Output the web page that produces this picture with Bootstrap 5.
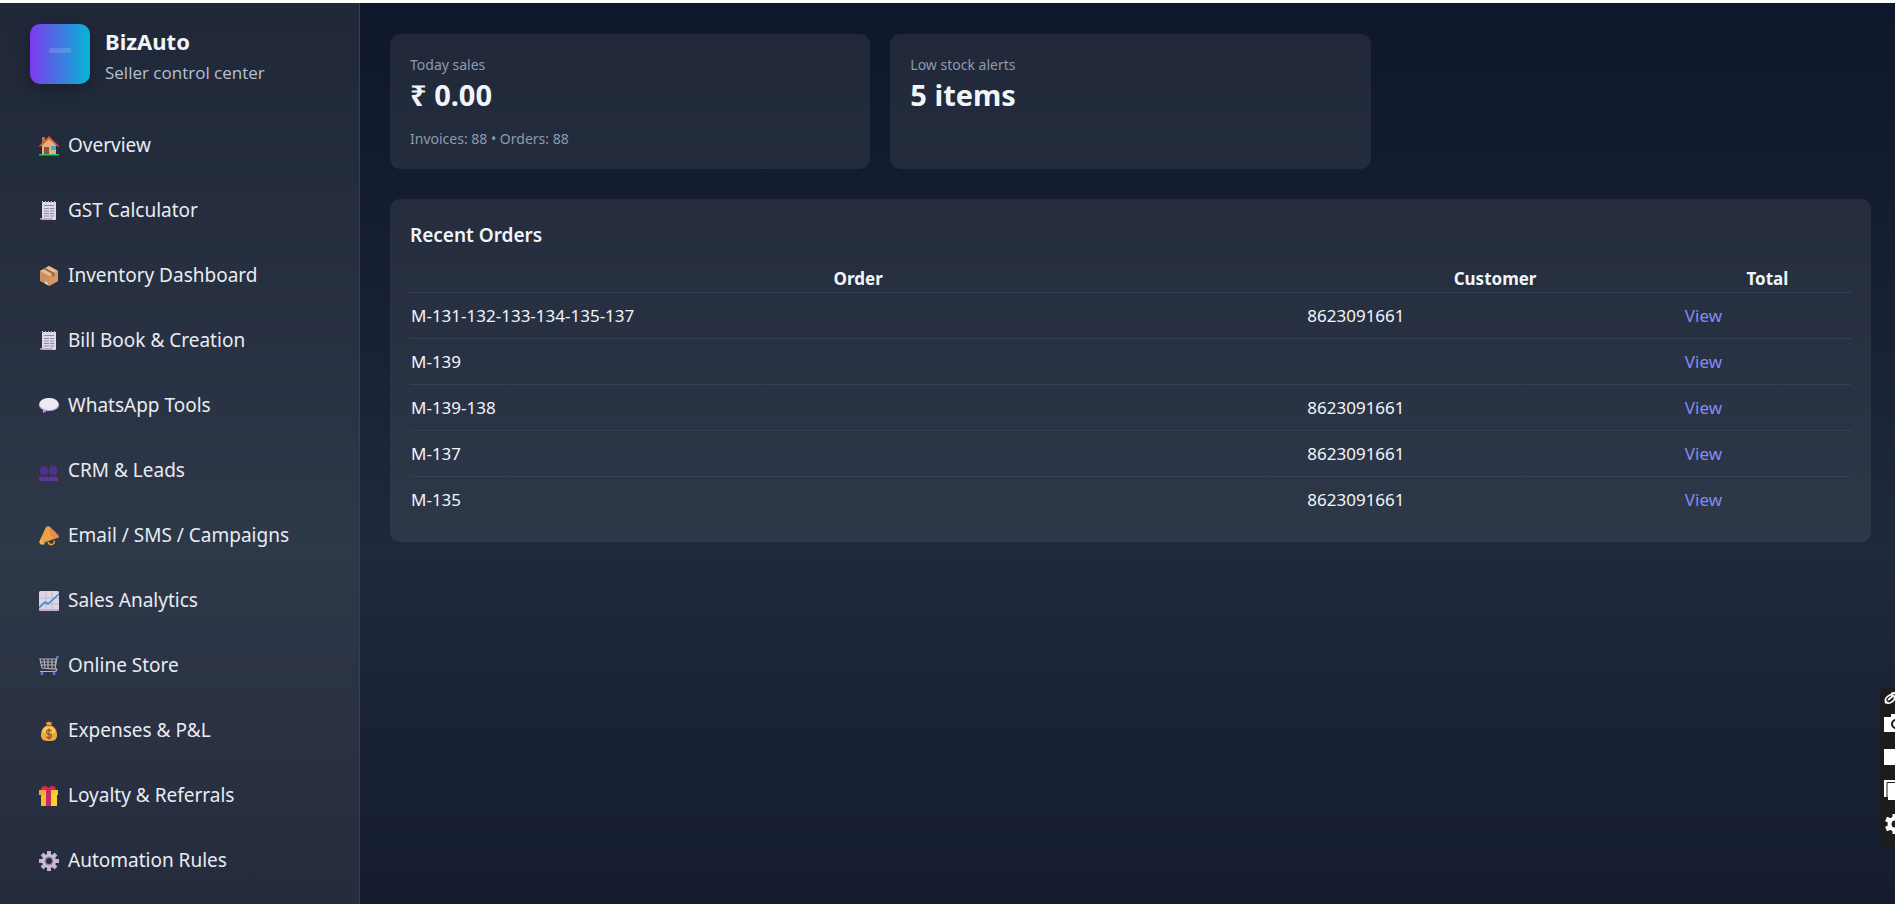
<!DOCTYPE html>
<html lang="en">
<head>
<meta charset="utf-8">
<meta name="viewport" content="width=device-width, initial-scale=1">
<title>BizAuto</title>
<link href="https://cdn.jsdelivr.net/npm/bootstrap@5.3.0/dist/css/bootstrap.min.css" rel="stylesheet">
<style>
body{font-family:"Noto Sans","Open Sans",sans-serif;color:#f1f5f9;background:#0f172a}
.app-shell{background:linear-gradient(180deg,#0f172a 0,#1e293b 61%,#151c2f 100%);border-top:3px solid #fcfcfa}
.sidebar{width:360px;background:rgba(255,255,255,.07);border-right:1px solid #334155;padding:21px 30px 0}
.brand{gap:15px}
.brand-text{padding-top:3px}
.logo-tile{width:60px;height:60px;border-radius:10px;background:linear-gradient(90deg,#7c3aed,#06b6d4);box-shadow:0 6px 18px rgba(2,6,23,.3)}
.logo-tile span{width:22px;height:5px;margin-bottom:8px;background:rgba(255,255,255,.14)}
.brand-name{font-size:22px;line-height:28px;font-weight:700}
.brand-sub{font-family:"Open Sans","Noto Sans",sans-serif;font-size:17px;line-height:30px;margin-top:3px;color:#b6c0cf}
.side-nav{margin-top:25px}
.side-nav .nav-link{height:65px;padding:0 9px;gap:9px;font-size:19px;color:#e8ecf2}
.side-nav svg{width:20px;height:20px;flex:none}
.main-area{padding:31px 24px 30px 30px}
.stat-grid{display:grid;grid-template-columns:repeat(3,1fr);gap:20px;margin-bottom:30px}
.panel{background:rgba(255,255,255,.07);border-radius:10px;padding:20px}
.stat-label{font-size:14px;line-height:22px;color:#8f9bae}
.stat-value{font-size:29px;line-height:38px;font-weight:700}
.stat-note{margin-top:15px;line-height:20px}
.panel h2{font-size:19px;line-height:32px;font-weight:600;margin-bottom:14px}
.orders{width:100%;table-layout:fixed;font-size:17px;line-height:25px}
.orders th{text-align:center;padding:1px;font-weight:700}
.orders td{padding:10px 1px}
.orders tbody tr{border-top:1px solid #334155}
.orders a{color:#818cf8;text-decoration:none}
.c-order{width:62.2%}.c-cust{width:26.2%}
.dock{top:688px;right:0;width:15px;height:158px;background:#1c1c1c;border-radius:4px 0 0 4px;overflow:hidden}
.dock button{display:block;border:0;padding:0;background:none;height:33px;width:30px}
.dock button:first-child{height:19px}
.dock svg{display:block;margin-left:4px}
</style>
</head>
<body>
<div class="app-shell d-flex vh-100 overflow-hidden">
 <aside class="sidebar flex-shrink-0">
  <div class="brand d-flex align-items-start">
   <div class="logo-tile d-flex align-items-center justify-content-center"><span></span></div>
   <div class="brand-text"><div class="brand-name">BizAuto</div><div class="brand-sub">Seller control center</div></div>
  </div>
  <nav class="side-nav nav flex-column flex-nowrap" aria-label="Main">
   <a class="nav-link d-flex align-items-center" href="#"><svg viewBox="0 0 20 20"><path d="M3 1h3v7H3z" fill="#b07848"/><path d="M3 9l7-7 7 7v10H3z" fill="#e3b27c"/><path d="M0 10L10 0l10 10-1 1-9-8-9 8z" fill="#e5533d"/><path d="M5 11h5v8H5z" fill="#875244"/><path d="M12 10h5v4h-5z" fill="#35a7ee"/><path d="M0 18h20v1.500H0z" fill="#36c46b"/></svg>Overview</a>
   <a class="nav-link d-flex align-items-center" href="#"><svg viewBox="0 0 20 20"><path d="M3 1h14v17H3z" fill="#dfd8e9"/><path d="M3 0h1v2H3zm3 0h1v2H6zm3 0h1v2H9zm3 0h1v2h-1zm3 0h1v2h-1z" fill="#c5bdd2"/><path d="M1 17h13v2H3q-2 0-2-2z" fill="#bda9d9"/><path d="M14 19h2q1 0 1-2h-3z" fill="#eee8f6"/><path d="M5 4.500h10M5 7.500h5m1 0h4M5 10h5m1 0h4M5 12.500h5m1 0h4M5 15h5m1 0h4" stroke="#928b9f"/></svg>GST Calculator</a>
   <a class="nav-link d-flex align-items-center" href="#"><svg viewBox="0 0 20 20"><path d="M1 5l9-5 9 5v10l-9 5-9-5z" fill="#ca8f62"/><path d="M1 5l9-5 9 5-9 5z" fill="#e7bd8b"/><path d="M10 10l9-5v10l-9 5z" fill="#d99a60"/><path d="M4.500 3l9 5v3l2-1V7l-9-5z" fill="#8d644e"/><path d="M6 15l3 2v2l-3-2z" fill="#ead5d5"/></svg>Inventory Dashboard</a>
   <a class="nav-link d-flex align-items-center" href="#"><svg viewBox="0 0 20 20"><path d="M3 1h14v17H3z" fill="#dfd8e9"/><path d="M3 0h1v2H3zm3 0h1v2H6zm3 0h1v2H9zm3 0h1v2h-1zm3 0h1v2h-1z" fill="#c5bdd2"/><path d="M1 17h13v2H3q-2 0-2-2z" fill="#bda9d9"/><path d="M14 19h2q1 0 1-2h-3z" fill="#eee8f6"/><path d="M5 4.500h10M5 7.500h5m1 0h4M5 10h5m1 0h4M5 12.500h5m1 0h4M5 15h5m1 0h4" stroke="#928b9f"/></svg>Bill Book &amp; Creation</a>
   <a class="nav-link d-flex align-items-center" href="#"><svg viewBox="0 0 20 20"><path d="M10 2C4 2 0 5 0 9c0 2 1.500 4 4 5v3l4-2h2c6 0 10-2.500 10-6s-4-7-10-7z" fill="#b9a4dd"/><ellipse cx="10" cy="8" rx="9.500" ry="6" fill="#f0eaf6"/></svg>WhatsApp Tools</a>
   <a class="nav-link d-flex align-items-center" href="#"><svg viewBox="0 0 20 20"><g fill="#4f3188"><rect x="1" y="5" width="8" height="9" rx="3.500"/><rect x="10" y="5" width="8" height="9" rx="3.500"/></g><path d="M0 20v-2q0-3 4-3h2q3 0 3.500 3 .5-3 3.500-3h2q4 0 4 3v2z" fill="#5c3795"/><path d="M3 14h4v2H3zm9 0h4v2h-4z" fill="#3c2568"/></svg>CRM &amp; Leads</a>
   <a class="nav-link d-flex align-items-center" href="#"><svg viewBox="0 0 20 20"><path d="M9 16q1 3 4 2.500 3-.5 2-4" fill="none" stroke="#f3a32e" stroke-width="1.500"/><path d="M7 1q2-1.500 4 0l9 9q0 2-2 2L4 17l-3-3z" fill="#eda044"/><path d="M11 2q7 4 8 9l-5 1q-4-4-3-10z" fill="#e98757"/><path d="M0 16l2-3 4 5-2 1-1-1-1 1z" fill="#f6b04a"/></svg>Email / SMS / Campaigns</a>
   <a class="nav-link d-flex align-items-center" href="#"><svg viewBox="0 0 20 20"><rect width="20" height="20" rx="1.500" fill="#ded5e7"/><path d="M0 7h20M0 13h20M7 0v20M13 0v20" stroke="#c2b8cc"/><path d="M0 18h20v1l-1 1H1l-1-1z" fill="#c4aed8"/><path d="M0 17l6-6 3 2 11-10" fill="none" stroke="#328fd5" stroke-width="1.600"/></svg>Sales Analytics</a>
   <a class="nav-link d-flex align-items-center" href="#"><svg viewBox="0 0 20 20" fill="none" stroke="#b5b0ba"><path d="M18 1l-2 12M1 3h16l-1 10-13-1L1 3zM1 6h15M2 9h14M5 3l1 9M9 3v9M13 3v9M1 15.500h15q3-1 1-3" stroke-width="1.200"/><path d="M17 1h3" stroke="#4b87d0" stroke-width="1.500"/><path d="M3 16v3m12-3v3" stroke="#4c7cd8" stroke-width="2.500"/></svg>Online Store</a>
   <a class="nav-link d-flex align-items-center" href="#"><svg viewBox="0 0 20 20"><path d="M7 1l2 .5L10 0l1 1.500L13 1l-1 4H8z" fill="#eea33c"/><path d="M7 5h6c3 1 5 5 5 9 0 5-3 6-8 6s-8-1-8-6c0-4 2-8 5-9z" fill="#efab3d"/><path d="M8 6h5c2 1 3 3 3 5-4 3-9 3-13-1 1-2 3-4 5-4z" fill="#fac953"/><path d="M7 4.500h6" stroke="#9a683e"/><path d="M12.500 10.500q-.5-1.500-2.500-1.500-2.500 0-2.500 2t2.500 2 2.500 2-2.500 2-2.500-1.500M10 7.500v11" fill="none" stroke="#855b30" stroke-width="1.300"/></svg>Expenses &amp; P&amp;L</a>
   <a class="nav-link d-flex align-items-center" href="#"><svg viewBox="0 0 20 20"><path d="M2 8h16v12H2z" fill="#f6b934"/><path d="M11 8h7v12h-7z" fill="#fbd231"/><path d="M0 4h19v5H0z" fill="#fac83d"/><path d="M0 4h6v5H0z" fill="#f4a23b"/><path d="M7 4h5v16H7z" fill="#c62662"/><path d="M2 4q0-4 4-4 2 0 3.500 2Q11 0 13 0q4 0 4 4z" fill="#e3263f"/></svg>Loyalty &amp; Referrals</a>
   <a class="nav-link d-flex align-items-center" href="#"><svg viewBox="0 0 20 20"><g stroke="#c3b5d3" stroke-width="4"><path d="M10 0v20M0 10h20M3 3l14 14M17 3L3 17"/></g><circle cx="10" cy="10" r="7" fill="#cbbfd8"/><circle cx="10" cy="10" r="4.500" fill="#9587a8"/><circle cx="10" cy="10" r="3" fill="#252e3e"/></svg>Automation Rules</a>
  </nav>
 </aside>
 <main class="main-area flex-grow-1">
  <div class="stat-grid">
   <section class="panel">
    <div class="stat-label">Today sales</div>
    <div class="stat-value">₹ 0.00</div>
    <div class="stat-label stat-note">Invoices: 88 • Orders: 88</div>
   </section>
   <section class="panel">
    <div class="stat-label">Low stock alerts</div>
    <div class="stat-value">5 items</div>
   </section>
  </div>
  <section class="panel">
   <h2>Recent Orders</h2>
   <table class="orders">
    <thead><tr><th class="c-order" scope="col">Order</th><th class="c-cust" scope="col">Customer</th><th scope="col">Total</th></tr></thead>
    <tbody>
     <tr><td>M-131-132-133-134-135-137</td><td>8623091661</td><td><a href="#">View</a></td></tr>
     <tr><td>M-139</td><td></td><td><a href="#">View</a></td></tr>
     <tr><td>M-139-138</td><td>8623091661</td><td><a href="#">View</a></td></tr>
     <tr><td>M-137</td><td>8623091661</td><td><a href="#">View</a></td></tr>
     <tr><td>M-135</td><td>8623091661</td><td><a href="#">View</a></td></tr>
    </tbody>
   </table>
  </section>
 </main>
</div>
<div class="dock position-fixed" role="toolbar" aria-label="Capture tools">
 <button type="button" aria-label="Link"><svg width="22" height="19" viewBox="0 0 22 19" fill="none" stroke="#fff" stroke-width="1.800"><ellipse cx="6" cy="11" rx="5" ry="3.500" transform="rotate(-35 6 11)"/><path d="M4 12l5-4M1 15l2-2M7 6q3-2 5 0"/></svg></button>
 <button type="button" aria-label="Screenshot"><svg width="22" height="33" viewBox="0 0 22 33"><path d="M0 10h7V7h8v3h7v15H0z" fill="#fff"/><circle cx="12" cy="17" r="4" fill="none" stroke="#1c1c1c" stroke-width="2"/></svg></button>
 <button type="button" aria-label="Record"><svg width="22" height="33" viewBox="0 0 22 33"><path d="M0 9h22v16H0z" fill="#fff"/></svg></button>
 <button type="button" aria-label="Gallery"><svg width="22" height="33" viewBox="0 0 22 33"><path d="M0 7h22v17H0z" fill="#fff"/><path d="M3 25V9.500h19" fill="none" stroke="#1c1c1c"/><path d="M4 11h18v16H4z" fill="#fff"/></svg></button>
 <button type="button" aria-label="Settings"><svg width="22" height="33" viewBox="0 0 22 33"><g fill="none" stroke="#fff"><path d="M11 8v5m0 10v5M2 13l5 2m8 6l5 2M2 23l5-2m8-6l5-2" stroke-width="5"/><circle cx="11" cy="18" r="5.500" stroke-width="4"/></g></svg></button>
</div>
<script src="https://cdn.jsdelivr.net/npm/bootstrap@5.3.0/dist/js/bootstrap.bundle.min.js"></script>
</body>
</html>
